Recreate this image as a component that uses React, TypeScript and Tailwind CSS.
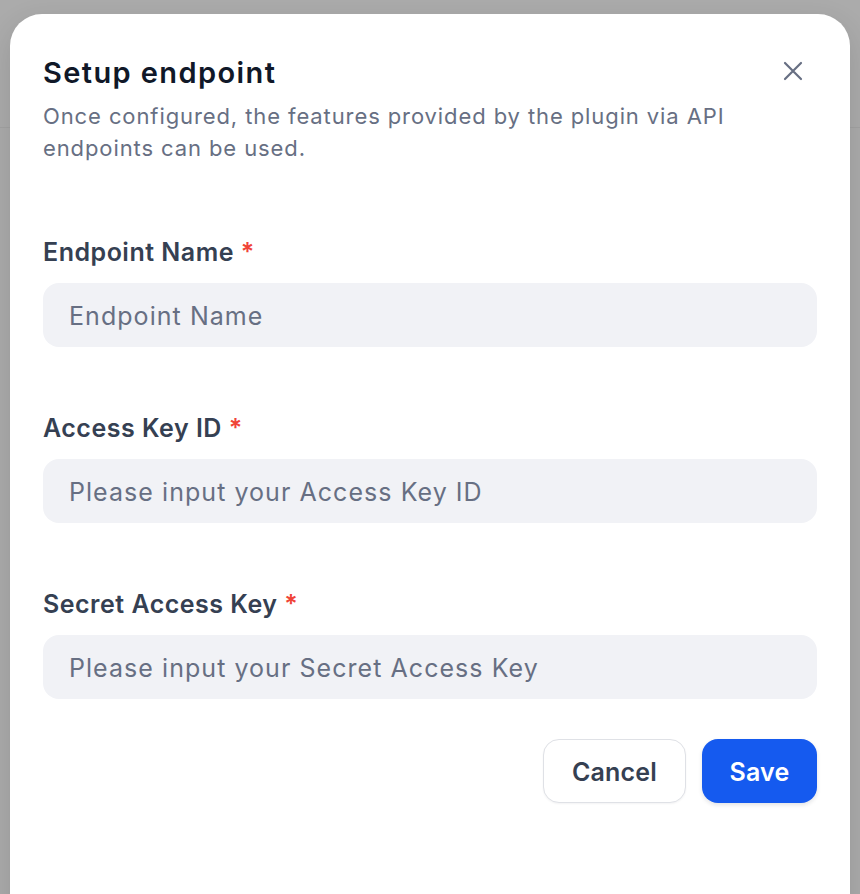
import { useState } from "react";

const fields = [
  { label: "Endpoint Name", placeholder: "Endpoint Name" },
  { label: "Access Key ID", placeholder: "Please input your Access Key ID" },
  { label: "Secret Access Key", placeholder: "Please input your Secret Access Key" },
];

export default function App() {
  const [values, setValues] = useState<string[]>(["", "", ""]);

  return (
    <div
      className="min-h-screen bg-[#ababab] overflow-hidden relative"
      style={{ fontFamily: "Inter, 'Noto Sans', sans-serif" }}
    >
      {/* page behind the overlay */}
      <div className="absolute left-0 right-0 top-0 h-[128px] border-b border-[#a2a2a2]" />

      <div className="relative px-[10px] pt-[14px]">
        {/* modal */}
        <div className="bg-white rounded-t-[32px] h-[900px] px-[33px] pt-[41px] shadow-[0_10px_30px_rgba(0,0,0,0.12)] relative">
          <button className="absolute right-[45px] top-[45px] w-[24px] h-[24px] flex items-center justify-center text-[#676f83]">
            <svg width="24" height="24" viewBox="0 0 24 24" fill="none">
              <path d="M4 4L20 20M20 4L4 20" stroke="currentColor" strokeWidth="2.2" strokeLinecap="round" />
            </svg>
          </button>

          <h1 className="text-[29px] leading-[36px] font-semibold text-[#101828] tracking-[1.4px]">
            Setup endpoint
          </h1>
          <p className="mt-[9px] text-[22px] leading-[32px] text-[#676f83] tracking-[0.9px] pr-[60px]">
            Once configured, the features provided by the plugin via API endpoints can be used.
          </p>

          <div className="mt-[72px] flex flex-col gap-[65px]">
            {fields.map((f, i) => (
              <div key={f.label} className="flex flex-col gap-[15px]">
                <label className="text-[25px] leading-[32px] font-semibold text-[#354052] tracking-[0.5px]">
                  {f.label} <span className="text-[#f04438]">*</span>
                </label>
                <input
                  value={values[i]}
                  onChange={(e) => {
                    const next = [...values];
                    next[i] = e.target.value;
                    setValues(next);
                  }}
                  placeholder={f.placeholder}
                  className="h-[64px] w-full rounded-[16px] bg-[#f1f2f6] px-[26px] pt-[2px] text-[25px] tracking-[1.05px] text-[#101828] placeholder:text-[#676f83] outline-none"
                />
              </div>
            ))}
          </div>

          <div className="mt-[40px] flex justify-end gap-[16px]">
            <button className="h-[64px] w-[143px] pt-[4px] rounded-[16px] border border-[#dfe1e6] bg-white text-[25px] font-semibold tracking-[0.2px] text-[#354052] shadow-[0_1px_2px_rgba(16,24,40,0.05)]">
              Cancel
            </button>
            <button className="h-[64px] w-[115px] pt-[4px] rounded-[16px] bg-[#155aef] text-[25px] font-semibold tracking-[0.2px] text-white shadow-[0_2px_4px_rgba(16,24,40,0.12)]">
              Save
            </button>
          </div>
        </div>
      </div>
    </div>
  );
}
